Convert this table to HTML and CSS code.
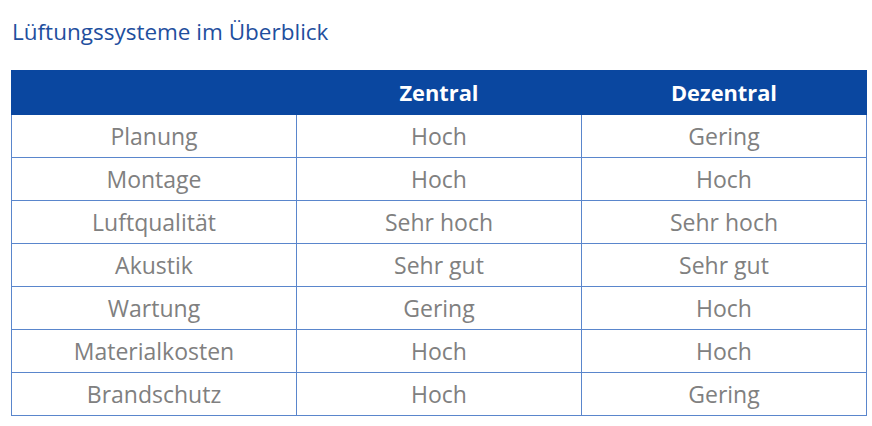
FILE: index.html
```html
<!DOCTYPE html>
<html lang="de">
<head>
<meta charset="utf-8">
<link rel="stylesheet" href="styles.css">
</head>
<body>
<h1 class="title">Lüftungssysteme im Überblick</h1>
<table class="grid">
  <thead>
    <tr><th></th><th>Zentral</th><th>Dezentral</th></tr>
  </thead>
  <tbody>
    <tr><td>Planung</td><td>Hoch</td><td>Gering</td></tr>
    <tr><td>Montage</td><td>Hoch</td><td>Hoch</td></tr>
    <tr><td>Luftqualität</td><td>Sehr hoch</td><td>Sehr hoch</td></tr>
    <tr><td>Akustik</td><td>Sehr gut</td><td>Sehr gut</td></tr>
    <tr><td>Wartung</td><td>Gering</td><td>Hoch</td></tr>
    <tr><td>Materialkosten</td><td>Hoch</td><td>Hoch</td></tr>
    <tr><td>Brandschutz</td><td>Hoch</td><td>Gering</td></tr>
  </tbody>
</table>
</body>
</html>
```
FILE: styles.css
```css
html, body { margin: 0; padding: 0; background: #fff; }
body {
  font-family: "Open Sans", "Liberation Sans", sans-serif;
  padding: 18px 0 0 11px;
}
.title {
  margin: 0 0 0 1px;
  font-weight: normal;
  font-size: 22.5px;
  line-height: 28px;
  color: #1f4f9e;
}
.grid {
  margin-top: 24px;
  border-collapse: collapse;
  width: 856px;
  table-layout: fixed;
}
.grid th {
  background: #0a47a0;
  color: #fff;
  font-weight: bold;
  font-size: 21.8px;
  height: 43px;
  padding: 0;
  border: 1px solid #0a47a0;
  text-align: center;
}
.grid td {
  height: 42px;
  padding: 0;
  border: 1px solid #5a86cc;
  text-align: center;
  color: #808080;
  font-size: 23px;
}
```
